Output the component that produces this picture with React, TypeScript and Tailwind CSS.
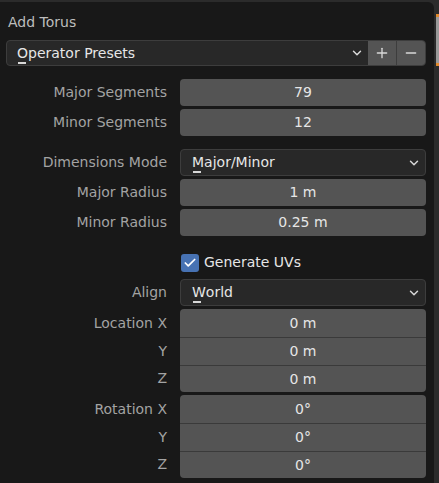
import { Check, ChevronDown, Minus, Plus } from "lucide-react";
import type { ReactNode } from "react";

const font = { fontFamily: '"DejaVu Sans", "Liberation Sans", sans-serif' };

function Accel({ text }: { text: string }) {
  return (
    <span>
      <span className="relative">
        {text[0]}
        <span className="absolute left-[1px] bottom-[-3px] h-[2px] w-[8px] bg-[#d8d8d8]" />
      </span>
      {text.slice(1)}
    </span>
  );
}

function Row({ label, children }: { label?: string; children: ReactNode }) {
  return (
    <div className="flex h-[27px] items-center">
      <div className="w-[161px] shrink-0 text-right text-[14px] text-[#a3a3a3]">{label}</div>
      <div className="ml-[13px] h-full flex-1">{children}</div>
    </div>
  );
}

function Field({ value }: { value: string }) {
  return (
    <div className="flex h-full items-center justify-center rounded-[4px] bg-[#545454] text-[14px] text-[#e6e6e6]">
      {value}
    </div>
  );
}

function Dropdown({ value }: { value: string }) {
  return (
    <div className="flex h-full items-center justify-between rounded-[4px] border border-[#3d3d3d] bg-[#282828] pl-[11px] pr-[4px] text-[14px] text-[#e6e6e6]">
      <Accel text={value} />
      <ChevronDown size={14} strokeWidth={2.5} className="text-[#d8d8d8]" />
    </div>
  );
}

const rowHeights = ["h-[28px]", "h-[28px]", "h-[27px]"];

function Stack({ label, values }: { label: string; values: string[] }) {
  const labels = [label, "Y", "Z"];
  return (
    <div className="flex">
      <div className="w-[161px] shrink-0 text-right text-[14px] text-[#a3a3a3]">
        {labels.map((l, i) => (
          <div key={i} className={`flex items-center justify-end ${rowHeights[i]}`}>
            {l}
          </div>
        ))}
      </div>
      <div className="ml-[13px] flex flex-1 flex-col overflow-hidden rounded-[4px] bg-[#545454]">
        {values.map((v, i) => (
          <div
            key={i}
            className={`flex items-center justify-center text-[14px] text-[#e6e6e6] ${rowHeights[i]} ${i > 0 ? "border-t border-[#3a3a3a]" : ""}`}
          >
            {v}
          </div>
        ))}
      </div>
    </div>
  );
}

export default function App() {
  return (
    <div className="flex h-[483px] w-[439px] overflow-hidden bg-[#2b2b2b]" style={font}>
      <div className="mt-[2px] w-[434px] shrink-0 rounded-tr-[6px] bg-[#181818] pl-[6px] pr-[8px]">
        <div className="flex h-[38px] items-center pl-[2px] pt-[2px] text-[14px] text-[#bdbdbd]">Add Torus</div>

        <div className="flex h-[26px] overflow-hidden rounded-[4px] border border-[#3d3d3d] bg-[#282828] text-[14px] text-[#e6e6e6]">
          <div className="flex flex-1 items-center justify-between pl-[10px] pr-[4px]">
            <Accel text="Operator Presets" />
            <ChevronDown size={14} strokeWidth={2.5} className="text-[#d8d8d8]" />
          </div>
          <div className="flex w-[28px] items-center justify-center bg-[#545454] text-[#d8d8d8]">
            <Plus size={16} strokeWidth={2} />
          </div>
          <div className="flex w-[29px] items-center justify-center border-l border-[#3d3d3d] bg-[#545454] text-[#d8d8d8]">
            <Minus size={16} strokeWidth={2} />
          </div>
        </div>

        <div className="mt-[13px] flex flex-col gap-[3px]">
          <Row label="Major Segments">
            <Field value="79" />
          </Row>
          <Row label="Minor Segments">
            <Field value="12" />
          </Row>
        </div>

        <div className="mt-[13px] flex flex-col gap-[3px]">
          <Row label="Dimensions Mode">
            <Dropdown value="Major/Minor" />
          </Row>
          <Row label="Major Radius">
            <Field value="1 m" />
          </Row>
          <Row label="Minor Radius">
            <Field value="0.25 m" />
          </Row>
        </div>

        <div className="mt-[13px] flex flex-col gap-[3px]">
          <Row>
            <div className="flex h-full items-center gap-[5px] pl-[1px] text-[14px] text-[#e6e6e6]">
              <span className="flex h-[18px] w-[18px] items-center justify-center rounded-[3px] bg-[#4772b3]">
                <Check size={14} strokeWidth={3} className="text-white" />
              </span>
              Generate UVs
            </div>
          </Row>
          <Row label="Align">
            <Dropdown value="World" />
          </Row>
          <Stack label="Location X" values={["0 m", "0 m", "0 m"]} />
          <Stack label="Rotation X" values={["0°", "0°", "0°"]} />
        </div>
      </div>
      <div className="flex flex-1 flex-col">
        <div className="h-[14px]" />
        <div className="ml-[2px] h-[3px] w-[3px] bg-[#e08a2c]" />
        <div className="ml-[2px] h-[46px] bg-[#9a9a9a]" />
        <div className="ml-[2px] h-[3px] bg-[#e08a2c]" />
      </div>
    </div>
  );
}
